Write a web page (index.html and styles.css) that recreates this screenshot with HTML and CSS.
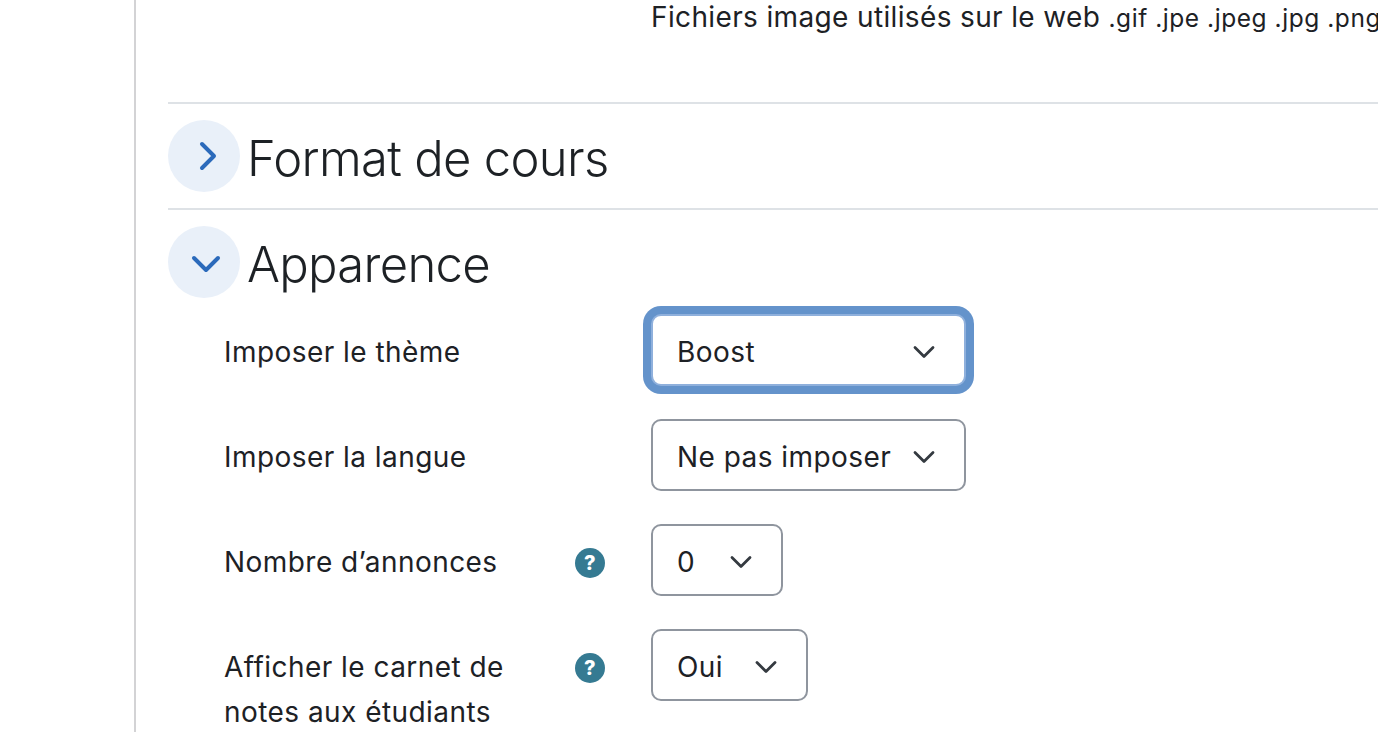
FILE: index.html
```html
<!DOCTYPE html>
<html lang="fr">
<head>
<meta charset="utf-8">
<title>Paramètres du cours</title>
<link rel="stylesheet" href="styles.css">
</head>
<body>
<div class="page">
  <div class="rail"></div>
  <main class="content">
    <p class="filetypes">Fichiers image utilisés sur le web <small>.gif .jpe .jpeg .jpg .png</small></p>
    <section class="section">
      <h3 class="section-head">
        <span class="toggle"><svg width="72" height="72" viewBox="0 0 72 72"><path class="chev" d="M34 24 L46 36 L34 48"/></svg></span>
        <span class="section-title">Format de cours</span>
      </h3>
    </section>
    <section class="section open">
      <h3 class="section-head">
        <span class="toggle"><svg width="72" height="72" viewBox="0 0 72 72"><path class="chev" d="M26 32 L38 44 L50 32"/></svg></span>
        <span class="section-title">Apparence</span>
      </h3>
      <div class="row">
        <div class="label">Imposer le thème</div>
        <div class="help"></div>
        <div class="select wide focus"><span>Boost</span><svg class="caret" width="22" height="14" viewBox="0 0 22 14"><path d="M2 2.500 L11 11.500 L20 2.500"/></svg></div>
      </div>
      <div class="row">
        <div class="label">Imposer la langue</div>
        <div class="help"></div>
        <div class="select wide"><span>Ne pas imposer</span><svg class="caret" width="22" height="14" viewBox="0 0 22 14"><path d="M2 2.500 L11 11.500 L20 2.500"/></svg></div>
      </div>
      <div class="row">
        <div class="label">Nombre d’annonces</div>
        <div class="help"><span class="help-icon">?</span></div>
        <div class="select num"><span>0</span><svg class="caret" width="22" height="14" viewBox="0 0 22 14"><path d="M2 2.500 L11 11.500 L20 2.500"/></svg></div>
      </div>
      <div class="row">
        <div class="label">Afficher le carnet de notes aux étudiants</div>
        <div class="help"><span class="help-icon">?</span></div>
        <div class="select yes"><span>Oui</span><svg class="caret" width="22" height="14" viewBox="0 0 22 14"><path d="M2 2.500 L11 11.500 L20 2.500"/></svg></div>
      </div>
    </section>
  </main>
</div>
</body>
</html>
```
FILE: styles.css
```css
html, body {
  margin: 0;
  padding: 0;
  height: 732px;
  overflow: hidden;
  background: #fff;
}
body {
  font-family: Inter, "Noto Sans", "Liberation Sans", sans-serif;
  font-size: 28px;
  line-height: 45px;
  letter-spacing: 0.45px;
  color: #1d2125;
}
.page {
  display: flex;
  height: 732px;
  overflow: hidden;
}
.rail {
  flex: 0 0 134px;
  border-right: 2px solid #d3d3d5;
}
.content {
  flex: 1;
  min-width: 0;
  padding-left: 32px;
}
.filetypes {
  margin: -5px 0 0 483px;
  height: 107px;
  white-space: nowrap;
  letter-spacing: 0.36px;
}
.filetypes small {
  font-size: 24.500px;
  letter-spacing: 0.55px;
}
.section {
  border-top: 2px solid #dee2e6;
  padding-top: 16px;
  height: 88px;
}
.section.open {
  height: auto;
}
.section-head {
  margin: 0;
  display: flex;
  align-items: flex-start;
  gap: 7px;
  height: 72px;
  font-size: 49px;
  font-weight: 300;
  line-height: 72px;
  letter-spacing: -0.700px;
  white-space: nowrap;
}
.section-title {
  margin-top: 3px;
}
.toggle {
  flex: 0 0 72px;
  height: 72px;
  border-radius: 50%;
  background: #e9f0f9;
}
.chev {
  fill: none;
  stroke: #2b6abb;
  stroke-width: 4;
  stroke-linecap: round;
  stroke-linejoin: round;
}
.row {
  display: grid;
  grid-template-columns: 351px 76px auto;
  align-items: start;
  margin: 16px 0 33px;
  min-height: 72px;
  padding-left: 56px;
}
.row + .row {
  margin-top: 0;
}
.label {
  padding-top: 16px;
  width: 300px;
}
.help {
  box-sizing: border-box;
  display: flex;
  align-items: center;
  height: 72px;
  padding-top: 5px;
}
.help-icon {
  width: 30px;
  height: 30px;
  border-radius: 50%;
  background: #357a92;
  color: #fff;
  font-size: 20px;
  font-weight: 800;
  line-height: 30px;
  text-align: center;
}
.select {
  box-sizing: border-box;
  display: flex;
  align-items: center;
  justify-content: space-between;
  height: 72px;
  padding: 4px 29px 0 24px;
  background: #fff;
  border: 2px solid #8f959e;
  border-radius: 10px;
  white-space: nowrap;
}
.select.wide { width: 315px; }
.select.num { width: 132px; }
.select.yes { width: 157px; }
.select.focus {
  border-color: #8fb0dc;
  box-shadow: 0 0 0 8px #6493cb;
}
.caret {
  fill: none;
  stroke: #343a40;
  stroke-width: 2.800;
  stroke-linecap: round;
  stroke-linejoin: round;
}
```
